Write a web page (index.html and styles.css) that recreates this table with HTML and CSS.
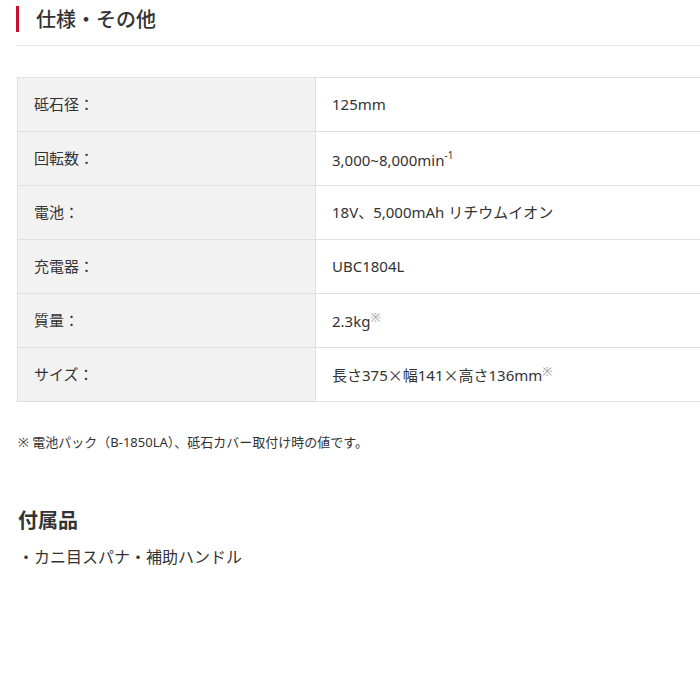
FILE: index.html
```html
<!DOCTYPE html>
<html lang="ja">

<head>
  <meta charset="UTF-8">
  <meta name="viewport" content="width=device-width, initial-scale=1.0">
  <title>仕様・その他</title>
  <link rel="stylesheet" href="styles.css">
</head>

<body>
  <div class="page">
    <h2 class="section-title">仕様・その他</h2>

    <table class="spec-table">
      <tr>
        <th>砥石径：</th>
        <td>125mm</td>
      </tr>
      <tr>
        <th>回転数：</th>
        <td>3,000~8,000min<sup>-1</sup></td>
      </tr>
      <tr>
        <th>電池：</th>
        <td>18V、5,000mAh リチウムイオン</td>
      </tr>
      <tr>
        <th>充電器：</th>
        <td>UBC1804L</td>
      </tr>
      <tr>
        <th>質量：</th>
        <td>2.3kg<sup class="mark">※</sup></td>
      </tr>
      <tr>
        <th>サイズ：</th>
        <td>長さ375<span class="cjk">×</span>幅141<span class="cjk">×</span>高さ136mm<sup class="mark">※</sup></td>
      </tr>
    </table>

    <p class="note">※ 電池パック（B-1850LA）、砥石カバー取付け時の値です。</p>

    <h3 class="sub-title">付属品</h3>
    <p class="accessories">・カニ目スパナ・補助ハンドル</p>
  </div>
</body>

</html>
```

FILE: styles.css
```css
html,
body {
  overflow-x: hidden;
}

body {
  margin: 0;
  background-color: #fff;
  color: #333;
  font-family: "Noto Sans", "Noto Sans CJK JP", sans-serif;
}

.page {
  padding: 6px 0 0 16px;
}

.cjk {
  font-family: "Noto Sans CJK JP", sans-serif;
}

.section-title {
  margin: 0;
  padding: 0 0 13px 0;
  border-bottom: 1px solid #e6e6e6;
  font-family: "Noto Sans CJK JP", sans-serif;
  font-size: 20px;
  font-weight: 500;
  line-height: 26px;
}

.section-title::before {
  content: "";
  display: inline-block;
  width: 3px;
  height: 26px;
  margin-right: 17px;
  vertical-align: top;
  background-color: #c8102e;
}

.spec-table {
  width: 720px;
  margin: 31px 0 0 1px;
  border-collapse: collapse;
  font-size: 15px;
}

.spec-table th,
.spec-table td {
  height: 53px;
  padding: 0 16px;
  border: 1px solid #e0e0e0;
  text-align: left;
  vertical-align: middle;
  font-weight: 400;
  line-height: 1;
}

.spec-table th {
  width: 265px;
  background-color: #f2f2f2;
}

.spec-table sup {
  font-size: 10px;
  vertical-align: 7px;
}

.spec-table sup.mark {
  color: #999;
  font-size: 12px;
  vertical-align: 5px;
}

.note {
  margin: 32px 0 0 2px;
  font-size: 13px;
  line-height: 16px;
}

.sub-title {
  margin: 58px 0 0 2px;
  font-family: "Noto Sans CJK JP", sans-serif;
  font-size: 20px;
  font-weight: 700;
  line-height: 24px;
}

.accessories {
  margin: 15px 0 0 2px;
  font-size: 16px;
  line-height: 20px;
}
```
